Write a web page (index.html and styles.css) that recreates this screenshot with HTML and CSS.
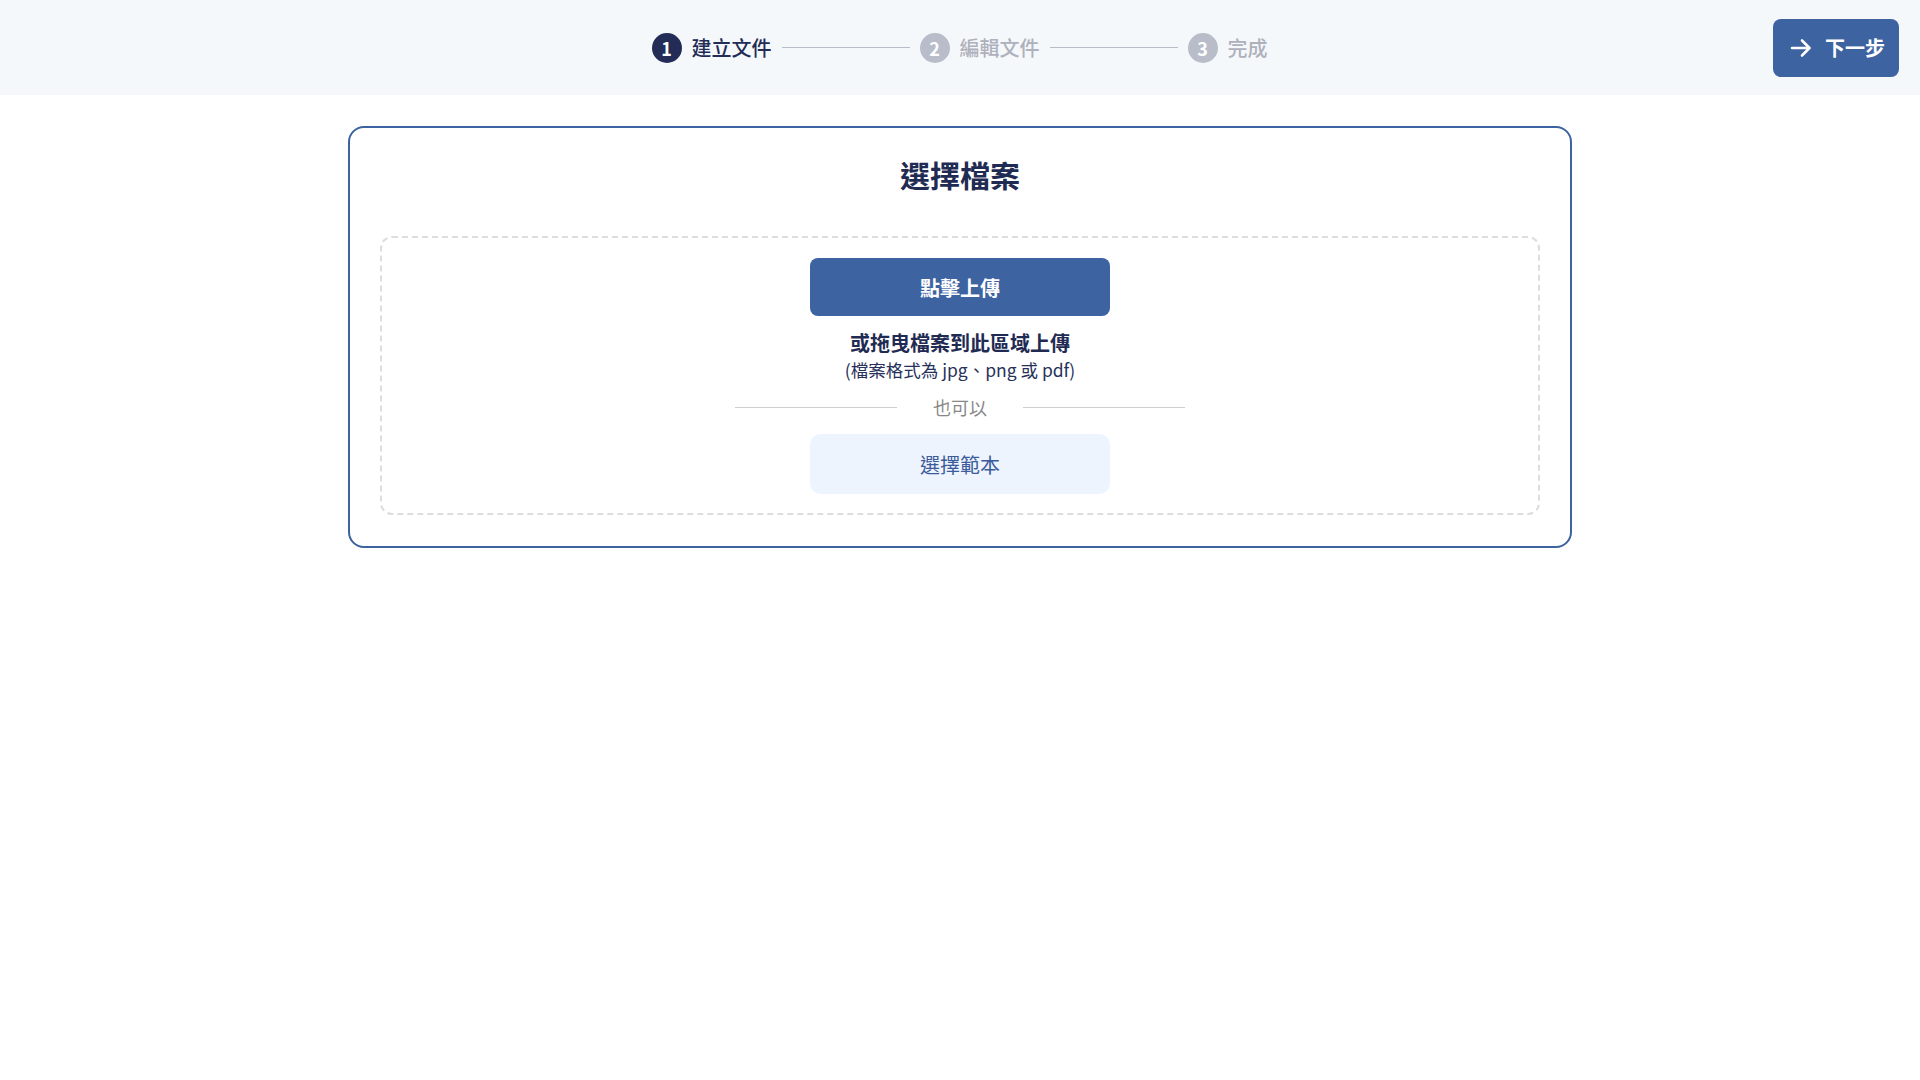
FILE: index.html
```html
<!DOCTYPE html>
<html lang="zh-Hant">
<head>
<meta charset="utf-8">
<title>建立文件</title>
<link rel="stylesheet" href="styles.css">
</head>
<body>
<header class="topbar">
  <div class="spacer"></div>
  <ol class="stepper">
    <li class="step active"><span class="num">1</span><span class="label">建立文件</span></li>
    <li class="step-line"></li>
    <li class="step"><span class="num">2</span><span class="label">編輯文件</span></li>
    <li class="step-line"></li>
    <li class="step"><span class="num">3</span><span class="label">完成</span></li>
  </ol>
  <div class="actions">
    <button class="next-btn" type="button">
      <svg class="arrow" viewBox="0 0 24 24" width="24" height="24" aria-hidden="true">
        <path d="M3 12 H20 M13 4.5 L20.5 12 L13 19.5" fill="none" stroke="#fff" stroke-width="2.6" stroke-linecap="round" stroke-linejoin="round"/>
      </svg>
      <span>下一步</span>
    </button>
  </div>
</header>

<main class="content">
  <section class="card">
    <h1 class="card-title">選擇檔案</h1>
    <div class="dropzone">
      <button class="upload-btn" type="button">點擊上傳</button>
      <p class="drop-hint">或拖曳檔案到此區域上傳</p>
      <p class="format-hint">(檔案格式為 jpg、png 或 pdf)</p>
      <div class="divider"><span class="line"></span><span class="divider-text">也可以</span><span class="line"></span></div>
      <button class="template-btn" type="button">選擇範本</button>
    </div>
  </section>
</main>
</body>
</html>
```

FILE: styles.css
```css
* { box-sizing: border-box; }

html, body {
  margin: 0;
  padding: 0;
  background: #ffffff;
  font-family: "Noto Sans CJK TC", "Noto Sans", sans-serif;
  color: #1f2b52;
}

.topbar {
  height: 95px;
  background: #f5f8fb;
  display: grid;
  grid-template-columns: 1fr auto 1fr;
  align-items: center;
  padding: 0 21px 0 20px;
}

.stepper {
  list-style: none;
  margin: 0;
  padding: 0;
  display: flex;
  align-items: center;
  gap: 10px;
}

.step {
  display: flex;
  align-items: center;
  gap: 10px;
  color: #aeb1bb;
}

.step .num {
  width: 30px;
  height: 30px;
  border-radius: 50%;
  background: #b9bdca;
  color: #ffffff;
  font-size: 18px;
  font-weight: 700;
  display: flex;
  align-items: center;
  justify-content: center;
  line-height: 1;
}

.step .label {
  font-size: 20px;
  line-height: 30px;
  font-weight: 500;
}

.step.active { color: #232c56; }
.step.active .num { background: #232c56; }

.step-line {
  width: 128px;
  height: 1px;
  background: #b8bcc6;
}

.actions {
  display: flex;
  justify-content: flex-end;
}

.next-btn {
  height: 58px;
  display: flex;
  align-items: center;
  gap: 12px;
  padding: 0 14px 0 16px;
  border: none;
  border-radius: 8px;
  background: #3d63a0;
  color: #ffffff;
  font-family: inherit;
  font-size: 20px;
  font-weight: 700;
  cursor: pointer;
}

.arrow { display: block; }

.content {
  padding-top: 31px;
}

.card {
  width: 1224px;
  margin: 0 auto;
  border: 2px solid #3d63a0;
  border-radius: 16px;
  padding: 24px 30px 31px;
  background: #ffffff;
}

.card-title {
  margin: 0 0 40px;
  text-align: center;
  font-size: 30px;
  line-height: 44px;
  font-weight: 700;
  color: #1f2b52;
}

.dropzone {
  border: 2px dashed #dddddd;
  border-radius: 12px;
  padding: 20px 0 19px;
  display: flex;
  flex-direction: column;
  align-items: center;
}

.upload-btn {
  width: 300px;
  height: 58px;
  border: none;
  border-radius: 8px;
  background: #3d63a0;
  color: #ffffff;
  font-family: inherit;
  font-size: 20px;
  font-weight: 700;
  cursor: pointer;
}

.drop-hint {
  margin: 12px 0 0;
  font-size: 20px;
  line-height: 30px;
  font-weight: 700;
  color: #1f2b52;
}

.format-hint {
  margin: 0;
  font-size: 17.5px;
  line-height: 24px;
  color: #27315a;
}

.divider {
  margin-top: 12px;
  width: 450px;
  height: 26px;
  display: flex;
  align-items: center;
}

.divider .line {
  flex: 1;
  height: 1px;
  background: #cfcfcf;
}

.divider-text {
  padding: 0 36px;
  font-size: 18px;
  line-height: 26px;
  color: #888888;
}

.template-btn {
  margin-top: 14px;
  width: 300px;
  height: 60px;
  border: none;
  border-radius: 10px;
  background: #eef4fe;
  color: #3c5b9b;
  font-family: inherit;
  font-size: 20px;
  font-weight: 400;
  cursor: pointer;
}
```
